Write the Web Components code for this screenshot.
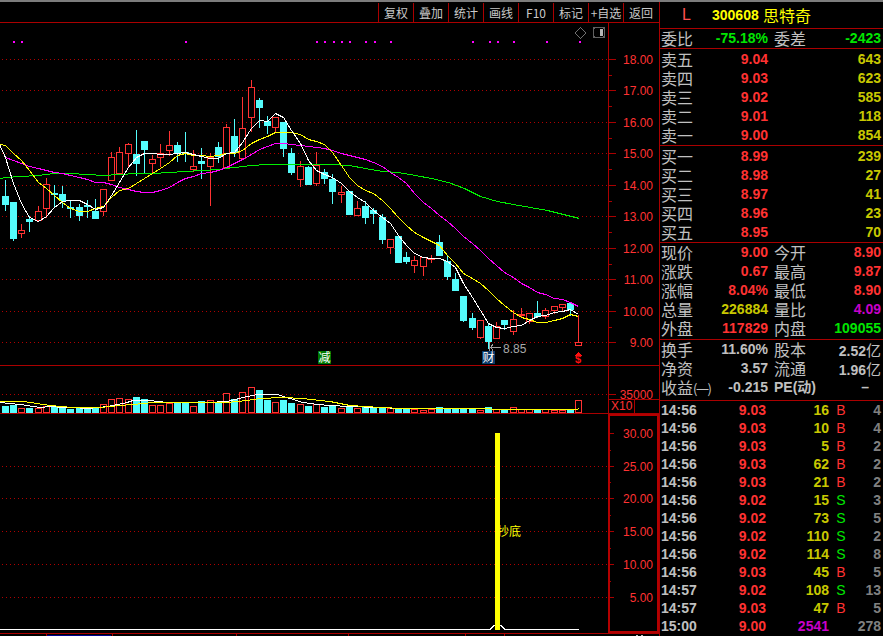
<!DOCTYPE html>
<html lang="zh">
<head>
<meta charset="utf-8">
<title>300608 思特奇</title>
<style>
  html, body { margin: 0; background: #000; overflow: hidden; }
</style>
</head>
<body>
<stock-screen>
  <tool-bar slot="left">
    <tool-button>复权</tool-button>
    <tool-button>叠加</tool-button>
    <tool-button>统计</tool-button>
    <tool-button>画线</tool-button>
    <tool-button>F10</tool-button>
    <tool-button>标记</tool-button>
    <tool-button>+自选</tool-button>
    <tool-button>返回</tool-button>
  </tool-bar>
  <price-chart slot="left"></price-chart>
  <volume-chart slot="left"></volume-chart>
  <indicator-chart slot="left"></indicator-chart>

  <panel-box slot="right" h="26"><stock-head code="300608" name="思特奇"></stock-head></panel-box>
  <panel-box slot="right" h="19">
    <quote-row label="委比" value="-75.18%" tone="green" label2="委差" value2="-2423" tone2="green"></quote-row>
  </panel-box>
  <panel-box slot="right" h="96" pad="1">
    <quote-row label="卖五" value="9.04" tone="red" value2="643" tone2="olive"></quote-row>
    <quote-row label="卖四" value="9.03" tone="red" value2="623" tone2="olive"></quote-row>
    <quote-row label="卖三" value="9.02" tone="red" value2="585" tone2="olive"></quote-row>
    <quote-row label="卖二" value="9.01" tone="red" value2="118" tone2="olive"></quote-row>
    <quote-row label="卖一" value="9.00" tone="red" value2="854" tone2="olive"></quote-row>
  </panel-box>
  <panel-box slot="right" h="96" pad="1">
    <quote-row label="买一" value="8.99" tone="red" value2="239" tone2="olive"></quote-row>
    <quote-row label="买二" value="8.98" tone="red" value2="27" tone2="olive"></quote-row>
    <quote-row label="买三" value="8.97" tone="red" value2="41" tone2="olive"></quote-row>
    <quote-row label="买四" value="8.96" tone="red" value2="23" tone2="olive"></quote-row>
    <quote-row label="买五" value="8.95" tone="red" value2="70" tone2="olive"></quote-row>
  </panel-box>
  <panel-box slot="right" h="96">
    <quote-row label="现价" value="9.00" tone="red" label2="今开" value2="8.90" tone2="red"></quote-row>
    <quote-row label="涨跌" value="0.67" tone="red" label2="最高" value2="9.87" tone2="red"></quote-row>
    <quote-row label="涨幅" value="8.04%" tone="red" label2="最低" value2="8.90" tone2="red"></quote-row>
    <quote-row label="总量" value="226884" tone="olive" label2="量比" value2="4.09" tone2="purple"></quote-row>
    <quote-row label="外盘" value="117829" tone="red" label2="内盘" value2="109055" tone2="green"></quote-row>
  </panel-box>
  <panel-box slot="right" h="60">
    <quote-row label="换手" value="11.60%" tone="gray" label2="股本" value2="2.52" unit2="亿" tone2="gray"></quote-row>
    <quote-row label="净资" value="3.57" tone="gray" label2="流通" value2="1.96" unit2="亿" tone2="gray"></quote-row>
    <quote-row label="收益" sub="(一)" value="-0.215" tone="gray" label2="PE(动)" value2="–" tone2="gray" dash></quote-row>
  </panel-box>
  <trade-list slot="right">
    <trade-row time="14:56" price="9.03" vol="16" side="B" count="4"></trade-row>
    <trade-row time="14:56" price="9.03" vol="10" side="B" count="4"></trade-row>
    <trade-row time="14:56" price="9.03" vol="5" side="B" count="2"></trade-row>
    <trade-row time="14:56" price="9.03" vol="62" side="B" count="2"></trade-row>
    <trade-row time="14:56" price="9.03" vol="21" side="B" count="2"></trade-row>
    <trade-row time="14:56" price="9.02" vol="15" side="S" count="3"></trade-row>
    <trade-row time="14:56" price="9.02" vol="73" side="S" count="5"></trade-row>
    <trade-row time="14:56" price="9.02" vol="110" side="S" count="2"></trade-row>
    <trade-row time="14:56" price="9.02" vol="114" side="S" count="8"></trade-row>
    <trade-row time="14:56" price="9.03" vol="45" side="B" count="5"></trade-row>
    <trade-row time="14:57" price="9.02" vol="108" side="S" count="13"></trade-row>
    <trade-row time="14:57" price="9.03" vol="47" side="B" count="5"></trade-row>
    <trade-row time="15:00" price="9.00" vol="2541" count="278" total></trade-row>
  </trade-list>
</stock-screen>

<script>
const LINE = '#aa0000', DOT = '#b00000', RED = '#ff3232', CYAN = '#54fcfc';
const SANS = '"Liberation Sans", "Noto Sans CJK SC", sans-serif';
const CJK = '"Noto Sans CJK SC", "Liberation Sans", sans-serif';

// candle x on screen
const cx = i => Math.floor(5.33 + 8.19 * i);

// [colour, wick top, body top, body bottom, wick bottom], in screen pixels
const candles = [
  ['c',180,196,204,210],['c',202,202,238,240],['r',224,230,233,237],['c',216,219,221,231],
  ['r',206,211,220,220],['r',178,184,208,217],['c',185,193,194,207],['c',186,194,200,207],
  ['c',200,207,208,217],['c',204,207,215,220],['c',200,205,206,217],['c',199,211,218,218],
  ['r',189,189,211,215],['r',152,157,180,180],['r',147,152,173,173],['r',143,144,153,166],
  ['c',130,154,163,175],['c',141,141,149,172],['r',155,159,163,172],['r',144,153,157,166],
  ['r',131,145,150,155],['c',142,145,153,161],['c',132,152,153,161],['r',150,166,169,171],
  ['c',148,161,163,178],['r',153,157,166,205],['c',142,147,156,162],['r',124,127,167,167],
  ['c',119,136,152,156],['r',97,128,158,158],['r',80,87,117,131],['c',98,100,107,127],
  ['c',116,121,125,133],['r',117,117,127,131],['c',122,122,148,156],['c',148,153,172,174],
  ['r',161,166,179,186],['c',166,167,184,184],['r',152,165,183,185],['c',169,172,178,183],
  ['c',174,179,191,203],['r',186,192,194,202],['c',191,191,214,214],['r',201,208,215,215],
  ['c',201,206,217,223],['c',208,210,213,223],['c',214,217,239,243],['r',239,239,247,253],
  ['c',236,236,262,262],['c',252,257,261,263],['r',256,260,265,272],['r',257,257,266,275],
  ['r',255,258,259,262],['c',235,242,255,255],['c',255,261,276,279],['c',273,279,290,290],
  ['c',296,296,320,321],['c',313,318,327,329],['r',320,320,337,338],['c',323,326,341,348],
  ['r',322,326,338,338],['c',320,320,324,329],['r',310,319,331,334],['r',308,314,315,317],
  ['r',313,313,321,323],['c',301,313,316,317],['r',308,310,316,318],['r',306,306,310,313],
  ['r',304,304,307,310],['c',303,303,309,315],['r',315,342,345,345]
];

const ma5 = [157,183,203,217,221,216,207,201,200,200,204,209,207,195,182,167,157,153,153,154,154,153,152,154,156,158,158,153,152,142,128,120,121,113,117,130,143,160,170,174,177,183,191,197,202,210,217,223,235,245,253,257,258,258,261,267,283,297,310,323,327,328,326,325,320,316,315,312,311,309,314];
const ma10 = [145,153,160,170,182,188,195,202,208,211,211,208,206,197,190,188,183,178,173,168,162,155,153,155,155,156,155,153,153,150,143,139,136,132,132,132,134,139,141,144,152,165,177,185,190,193,200,208,217,225,232,237,241,245,255,263,273,278,283,290,298,305,312,317,319,322,322,320,318,314,316];
const ma20 = [157,160,163,166,168,170,172,173,175,177,179,182,182,184,187,189,191,192,192,190,187,182,178,176,173,172,170,167,163,159,154,149,146,143,143,144,145,146,147,148,150,153,155,157,159,162,166,172,177,183,193,202,208,215,221,228,236,243,250,258,265,272,277,283,287,292,294,298,299,302,306];
const ma60 = [[0,178],[5,177],[21,176],[37,175],[54,173],[70,173],[87,174],[103,175],[119,174],[136,173],[152,173],[169,172],[185,171],[201,170],[218,169],[234,167],[251,165],[267,164],[283,164],[300,164],[330,164],[349,165],[365,168],[382,171],[398,172],[415,175],[431,178],[448,182],[464,188],[480,196],[497,201],[513,204],[530,207],[547,210],[563,214],[579,218]];

const vols = [406,405,408,408,408,406,407,407,409,407,408,407,404,399,398,399,397,399,405,405,403,403,402,406,401,400,402,393,399,392,387,390,400,402,400,403,404,406,404,407,405,408,407,408,407,408,408,408,408,409,409,410,409,407,409,409,409,409,410,407,409,410,407,409,409,409,409,410,410,409,400];
const volWhite = [[0,402],[10,403],[20,404],[27,405],[33,406],[40,407],[50,406],[63,407],[73,407],[87,408],[100,407],[113,405],[127,402],[133,400],[150,400],[167,402],[187,402],[207,402],[227,401],[243,397],[257,394],[277,394],[290,398],[303,402],[317,404],[330,405],[350,406],[403,408],[577,409]];
const volYellow = [[0,401],[23,401],[37,403],[50,405],[73,407],[100,407],[120,405],[133,404],[153,402],[173,402],[207,402],[227,402],[247,400],[260,398],[283,397],[303,398],[320,400],[330,401],[350,405],[380,407],[403,408],[577,409],[579,408]];

const rect = (x, y, w, h, fill) => `<rect x="${x}" y="${y}" width="${w}" height="${h}" fill="${fill}"/>`;
const dotted = (y, x2 = 608) => `<line x1="2" x2="${x2}" y1="${y + .5}" y2="${y + .5}" stroke="${DOT}" stroke-dasharray="1 3"/>`;
const poly = (pts, color) => `<polyline points="${pts.map(p => p.join(',')).join(' ')}" fill="none" stroke="${color}"/>`;
const series = (arr, color, first) => poly((first ? [first] : []).concat(arr.map((y, i) => [cx(i) + .5, y + .5])), color);
const label = (txt, y, x = 653) => `<text x="${x}" y="${y}" text-anchor="end" fill="${RED}">${txt}</text>`;

const svgStyle = `
  :host { display: block; }
  svg { display: block; shape-rendering: crispEdges; }
  text { font: 12px ${SANS}; }
`;

class StockScreen extends HTMLElement {
  connectedCallback() {
    this.attachShadow({ mode: 'open' }).innerHTML = `
      <style>
        :host { display: grid; grid-template-columns: 659px 224px; width: 883px; height: 636px; box-sizing: border-box;
                border-top: 2px solid #7c7c7c; background: #000; overflow: hidden; }
        .left { display: flex; flex-direction: column; min-width: 0; }
        .right { display: flex; flex-direction: column; border-left: 1px solid ${LINE}; }
      </style>
      <div class="left"><slot name="left"></slot></div>
      <div class="right"><slot name="right"></slot></div>`;
  }
}

class ToolBar extends HTMLElement {
  connectedCallback() {
    this.attachShadow({ mode: 'open' }).innerHTML = `
      <style>
        :host { display: flex; justify-content: flex-end; height: 20px; padding-right: 1px; border-bottom: 1px solid ${LINE}; }
      </style>
      <slot></slot>`;
  }
}

class ToolButton extends HTMLElement {
  connectedCallback() {
    this.attachShadow({ mode: 'open' }).innerHTML = `
      <style>
        :host { display: block; box-sizing: border-box; width: 35px; margin-top: 1px; border-left: 1px solid ${LINE};
                color: #c8c8c8; font: 12px/19px ${CJK}; text-align: center; white-space: nowrap; }
      </style>
      <slot></slot>`;
  }
}

class PriceChart extends HTMLElement {
  connectedCallback() {
    const grid = [[59,'18.00'],[90,'17.00'],[122,'16.00'],[153,'15.00'],[185,'14.00'],[216,'13.00'],[248,'12.00'],[279,'11.00'],[311,'10.00'],[342,'9.00']];
    const marks = [13,21,185,316,324,333,341,349,365,374,390,472,489,497,513,546,579];
    let body = '';
    grid.forEach(([y, txt], n) => {
      body += dotted(y) + rect(608, y, 8, 1, LINE) + label(txt, y + 5);
      if (n < grid.length - 1) body += rect(608, Math.round((y + grid[n + 1][0]) / 2), 4, 1, LINE);
    });
    marks.forEach(x => { body += rect(x, 41, 2, 2, '#ff00ff'); });
    candles.forEach(([c, wt, bt, bb, wb], i) => {
      const x = cx(i);
      if (c === 'c') {
        body += rect(x, wt, 1, wb - wt + 1, CYAN) + rect(x - 3, bt, 7, bb - bt + 1, CYAN);
      } else {
        if (wt < bt) body += rect(x, wt, 1, bt - wt, RED);
        if (wb > bb) body += rect(x, bb, 1, wb - bb + 1, RED);
        body += `<rect x="${x - 2.5}" y="${bt + .5}" width="6" height="${bb - bt}" fill="#000" stroke="${RED}"/>`;
      }
    });
    body += poly(ma60.map(([x, y]) => [x + .5, y + .5]), '#00f000') + series(ma20, '#ff00ff') + series(ma10, '#ffff00', [0, 144.5]) + series(ma5, '#ffffff', [0, 145.5]);
    // lowest price marker
    body += rect(489, 342, 1, 9, '#a0a0a0') + rect(490, 347, 11, 1, '#a0a0a0') +
      `<polyline points="493,344.5 490.5,347.5 493,350.5" fill="none" stroke="#a0a0a0"/>` +
      `<text x="503" y="353" fill="#a8a8a8">8.85</text>`;
    // event badges
    body += rect(318, 351, 13, 13, '#007800') + `<text x="324.5" y="362" text-anchor="middle" fill="#fff" style="font-family:${CJK}">减</text>`;
    body += rect(482, 351, 13, 13, '#0a3a6a') + `<text x="488.5" y="362" text-anchor="middle" fill="#fff" style="font-family:${CJK}">财</text>`;
    body += `<polygon points="578,352 582,356 574,356" fill="#ff1010"/><text x="578" y="363" text-anchor="middle" fill="#ff1010" style="font-size:11px;font-weight:bold">$</text>`;
    // little tools on the corner
    body += `<polygon points="580.5,27.5 586,33 580.5,38.5 575,33" fill="none" stroke="#707070"/>` +
      `<rect x="593.5" y="27.5" width="11" height="10" rx="2" fill="none" stroke="#606060" stroke-width="1.4"/>` + rect(600, 29, 3, 7, '#b8b8b8');
    body += rect(0, 365, 659, 1, LINE) + rect(608, 23, 1, 342, LINE);
    this.attachShadow({ mode: 'open' }).innerHTML = `
      <style>${svgStyle}</style>
      <svg width="659" height="343" viewBox="0 23 659 343">${body}</svg>`;
  }
}

class VolumeChart extends HTMLElement {
  connectedCallback() {
    let body = dotted(394) + rect(608, 394, 8, 1, LINE) + label('35000', 399);
    vols.forEach((top, i) => {
      const x = cx(i);
      body += candles[i][0] === 'c'
        ? rect(x - 3, top, 7, 413 - top, CYAN)
        : `<rect x="${x - 2.5}" y="${top + .5}" width="6" height="${412 - top}" fill="#000" stroke="${RED}"/>`;
    });
    body += poly(volWhite.map(([x, y]) => [x, y + .5]), '#fff') + poly(volYellow.map(([x, y]) => [x, y + .5]), '#ffff00');
    // X10 box sits over the axis label
    body += rect(609, 399, 50, 14, '#000') + rect(608, 399, 51, 1, LINE) + rect(634, 399, 1, 14, LINE) +
      `<text x="611" y="410" fill="${RED}">X10</text>`;
    body += rect(0, 413, 659, 1, LINE) + rect(608, 366, 1, 48, LINE);
    this.attachShadow({ mode: 'open' }).innerHTML = `
      <style>${svgStyle}</style>
      <svg width="659" height="48" viewBox="0 366 659 48">${body}</svg>`;
  }
}

class IndicatorChart extends HTMLElement {
  connectedCallback() {
    const grid = [[433,'30.00'],[466,'25.00'],[498,'20.00'],[531,'15.00'],[564,'10.00'],[597,'5.00']];
    let body = '';
    grid.forEach(([y, txt], n) => {
      if (n) body += dotted(y);
      body += rect(608, y, 6, 1, LINE) + label(txt, y + 5);
      if (n < grid.length - 1) body += rect(608, Math.round((y + grid[n + 1][0]) / 2), 3, 1, LINE);
    });
    body += `<text x="497" y="536" fill="#ffff00" style="font-family:${CJK}">抄底</text>`;
    body += poly([[0, 629.5], [490, 629.5], [494, 625.5], [501, 625.5], [505, 629.5], [579, 629.5]], '#fff');
    body += rect(495, 433, 5, 197, '#ffff00');
    // selected panel frame on the axis and the time axis under it
    body += `<rect x="609" y="415" width="49" height="217" fill="none" stroke="#b40000" stroke-width="2"/>`;
    body += rect(0, 633, 659, 1, LINE);
    [46, 112, 236, 348, 465, 504].forEach(x => { body += rect(x, 633, 1, 3, LINE); });
    body += rect(47, 635, 64, 1, '#000090') + rect(636, 635, 2, 1, '#c0c0c0') + rect(641, 635, 2, 1, '#c0c0c0');
    this.attachShadow({ mode: 'open' }).innerHTML = `
      <style>${svgStyle}</style>
      <svg width="659" height="222" viewBox="0 414 659 222">${body}</svg>`;
  }
}

class PanelBox extends HTMLElement {
  connectedCallback() {
    this.attachShadow({ mode: 'open' }).innerHTML = `
      <style>
        :host { display: block; height: ${this.getAttribute('h')}px; border-bottom: 1px solid ${LINE}; }
        .in { padding-top: ${this.getAttribute('pad') || 0}px; }
      </style>
      <div class="in"><slot></slot></div>`;
  }
}

class StockHead extends HTMLElement {
  connectedCallback() {
    this.attachShadow({ mode: 'open' }).innerHTML = `
      <style>
        :host { display: flex; align-items: center; height: 26px; color: #ffff00; white-space: nowrap; }
        .l { width: 30px; margin-left: 22px; color: #ff5050; font: 16px ${SANS}; }
        .code { width: 51px; font: bold 14px ${SANS}; }
        .name { font: 16px ${CJK}; }
      </style>
      <span class="l">L</span>
      <span class="code">${this.getAttribute('code')}</span>
      <span class="name">${this.getAttribute('name')}</span>`;
  }
}

const TONES = { red: RED, olive: '#c8c800', green: '#00e600', purple: '#c800c8', gray: '#c0c0c0' };

class QuoteRow extends HTMLElement {
  connectedCallback() {
    const a = n => this.getAttribute(n) || '';
    const sub = a('sub') ? `<small>${a('sub')}</small>` : '';
    const unit = a('unit2') ? `<i>${a('unit2')}</i>` : '';
    this.attachShadow({ mode: 'open' }).innerHTML = `
      <style>
        :host { display: grid; grid-template-columns: 32px 75px 6px 32px 1fr; height: 19px; padding: 0 2px 0 1px;
                font: 16px/19px ${CJK}; color: #c0c0c0; white-space: nowrap; }
        b { font: bold 14px/19px ${SANS}; text-align: right; }
        i { font: 15px/19px ${CJK}; }
        small { font: 13px/19px ${CJK}; letter-spacing: -1.5px; }
        .pe { font-family: ${SANS}; font-size: 14px; font-weight: bold; }
        .v1 { grid-column: 2; color: ${TONES[a('tone')]}; }
        .l2 { grid-column: 4; }
        .v2 { grid-column: 5; color: ${TONES[a('tone2')]}; padding-right: ${this.hasAttribute('dash') ? 12 : 0}px; }
      </style>
      <span>${a('label')}${sub}</span>
      <b class="v1">${a('value')}</b>
      <span class="l2 ${a('label2').startsWith('PE') ? 'pe' : ''}">${a('label2')}</span>
      <b class="v2">${a('value2')}${unit}</b>`;
  }
}

class TradeList extends HTMLElement {
  connectedCallback() {
    this.attachShadow({ mode: 'open' }).innerHTML = `
      <style>:host { display: block; }</style>
      <slot></slot>`;
  }
}

class TradeRow extends HTMLElement {
  connectedCallback() {
    const a = n => this.getAttribute(n) || '';
    const total = this.hasAttribute('total');
    const side = a('side');
    this.attachShadow({ mode: 'open' }).innerHTML = `
      <style>
        :host { display: grid; grid-template-columns: 38px 67px 63px 24px 1fr; height: 18px; padding: 0 2px 0 1px;
                font: bold 14px/18px ${SANS}; white-space: nowrap; }
        span { text-align: right; }
        .t { text-align: left; color: #c0c0c0; }
        .p { color: ${RED}; }
        .n { color: ${total ? '#c800c8' : '#c8c800'}; }
        .s { text-align: center; font-weight: normal; color: ${side === 'S' ? '#00e600' : RED}; }
        .c { color: #808080; }
      </style>
      <span class="t">${a('time')}</span>
      <span class="p">${a('price')}</span>
      <span class="n">${a('vol')}</span>
      <span class="s">${side}</span>
      <span class="c">${a('count')}</span>`;
  }
}

customElements.define('stock-screen', StockScreen);
customElements.define('tool-bar', ToolBar);
customElements.define('tool-button', ToolButton);
customElements.define('price-chart', PriceChart);
customElements.define('volume-chart', VolumeChart);
customElements.define('indicator-chart', IndicatorChart);
customElements.define('panel-box', PanelBox);
customElements.define('stock-head', StockHead);
customElements.define('quote-row', QuoteRow);
customElements.define('trade-list', TradeList);
customElements.define('trade-row', TradeRow);
</script>
</body>
</html>
